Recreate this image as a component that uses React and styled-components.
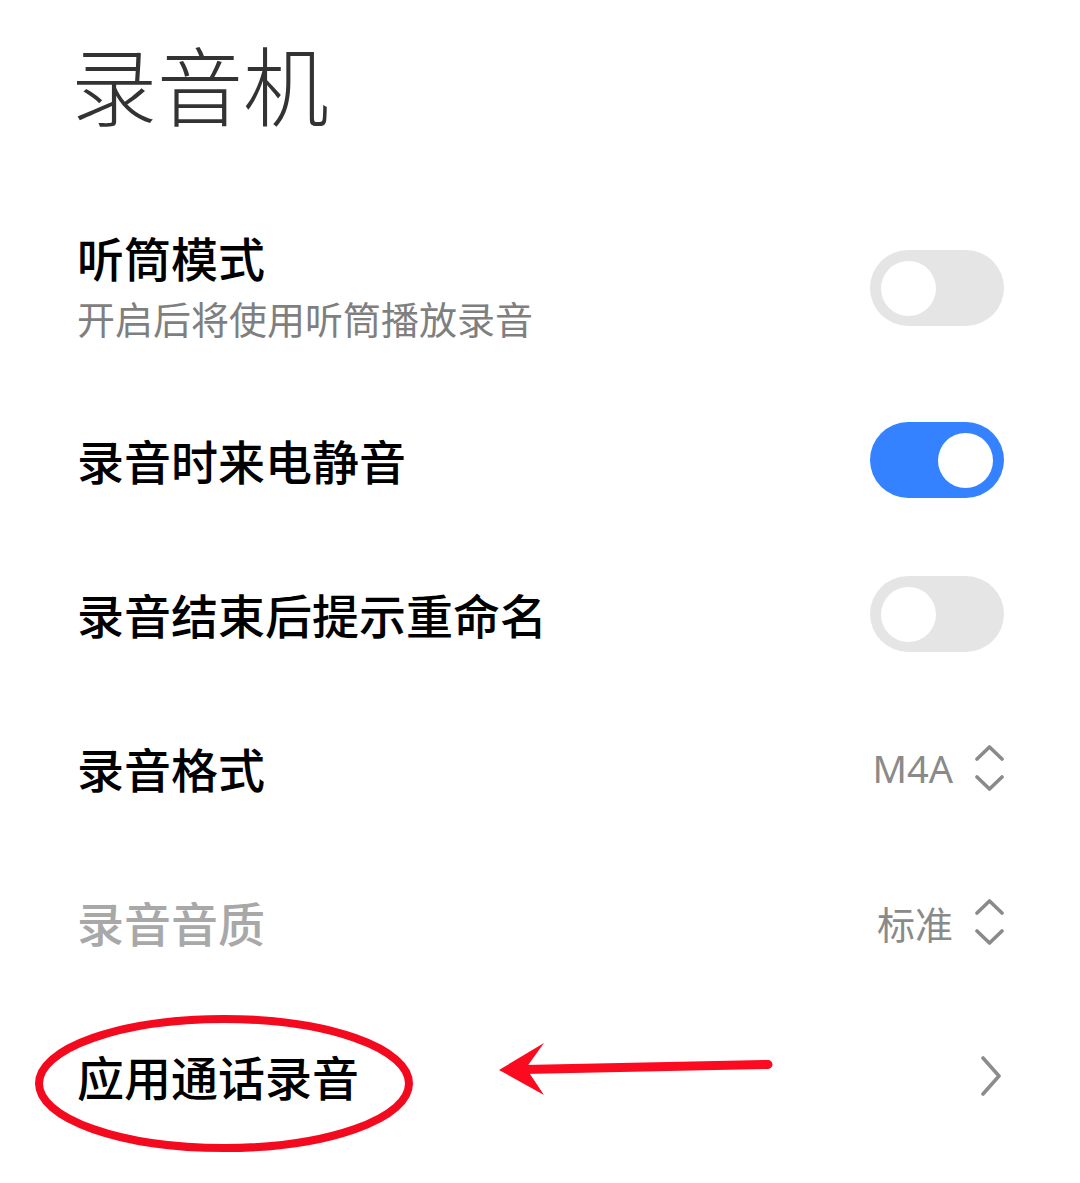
import React from 'react'
import styled, { createGlobalStyle, css } from 'styled-components'

const GlobalStyle = createGlobalStyle`
    html, body {
        margin: 0;
        padding: 0;
        background: #fff;
    }
    body {
        font-family: "Noto Sans CJK SC", "Noto Sans", sans-serif;
    }
`

const Page = styled.div`
    position: relative;
    width: 1080px;
    height: 1183px;
    background: #fff;
    overflow: hidden;
`

const Header = styled.div`
    height: 193px;
    padding: 36px 0 0 71px;
    box-sizing: border-box;
`

const Title = styled.h1`
    margin: 0;
    font-size: 86px;
    line-height: 1.1;
    font-weight: 300;
    color: #333;
`

const List = styled.div`
    display: flex;
    flex-direction: column;
    padding: 0 76px 0 77px;
`

const Row = styled.div`
    display: flex;
    align-items: center;
    justify-content: space-between;
    height: ${p => (p.tall ? '190px' : '154px')};
`

const Texts = styled.div`
    display: flex;
    flex-direction: column;
    margin-bottom: 5px;
`

const Label = styled.div`
    font-size: 47px;
    line-height: 1.2;
    font-weight: 500;
    color: ${p => (p.disabled ? '#a8a8a8' : '#000')};
`

const Sub = styled.div`
    font-size: 38px;
    line-height: 1.3;
    color: #7f7f7f;
    margin-top: 7px;
`

const Track = styled.div`
    position: relative;
    width: 134px;
    height: 76px;
    border-radius: 38px;
    background: #e5e5e5;
    flex-shrink: 0;
    ${p => p.on && css`
        background: #3482ff;
    `}
`

const Knob = styled.div`
    position: absolute;
    top: 11px;
    left: ${p => (p.on ? '68px' : '11px')};
    width: 55px;
    height: 55px;
    border-radius: 50%;
    background: #fff;
`

const Value = styled.div`
    display: flex;
    align-items: center;
    gap: 22px;
    color: #8a8a8a;
    font-size: 38px;
    font-family: "Noto Sans", "Noto Sans CJK SC", sans-serif;
`

const Overlay = styled.svg`
    position: absolute;
    top: 0;
    left: 0;
    pointer-events: none;
`

const Switch = ({ on }) => (
    <Track on={on}>
        <Knob on={on} />
    </Track>
)

const UpDown = () => (
    <svg width="29" height="46" viewBox="0 0 29 46" fill="none" stroke="#8a8a8a" strokeWidth="3.6" strokeLinecap="round" strokeLinejoin="round">
        <path d="M2 14 L14.5 2 L27 14" />
        <path d="M2 32 L14.5 44 L27 32" />
    </svg>
)

const ChevronRight = () => (
    <svg width="22" height="40" viewBox="0 0 22 40" fill="none" stroke="#8c8c8c" strokeWidth="3.6" strokeLinecap="round" strokeLinejoin="round" style={{ marginRight: 2 }}>
        <path d="M3 2 L19 20 L3 38" />
    </svg>
)

const App = () => {
    return (
        <Page>
            <GlobalStyle />
            <Header>
                <Title>录音机</Title>
            </Header>
            <List>
                <Row tall>
                    <Texts>
                        <Label>听筒模式</Label>
                        <Sub>开启后将使用听筒播放录音</Sub>
                    </Texts>
                    <Switch />
                </Row>
                <Row>
                    <Label>录音时来电静音</Label>
                    <Switch on />
                </Row>
                <Row>
                    <Label>录音结束后提示重命名</Label>
                    <Switch />
                </Row>
                <Row>
                    <Label>录音格式</Label>
                    <Value>M4A<UpDown /></Value>
                </Row>
                <Row>
                    <Label disabled>录音音质</Label>
                    <Value>标准<UpDown /></Value>
                </Row>
                <Row>
                    <Label>应用通话录音</Label>
                    <ChevronRight />
                </Row>
            </List>
            <Overlay width="1080" height="1183" viewBox="0 0 1080 1183">
                <ellipse cx="224" cy="1083.5" rx="185" ry="64.5" fill="none" stroke="#f40a1f" strokeWidth="8" />
                <path d="M768 1064.5 L524 1069.5" stroke="#fb0a20" strokeWidth="9" strokeLinecap="round" />
                <path d="M499 1070 L544 1043 L526 1068 L544 1095 Z" fill="#fb0a20" />
            </Overlay>
        </Page>
    )
}

export default App
